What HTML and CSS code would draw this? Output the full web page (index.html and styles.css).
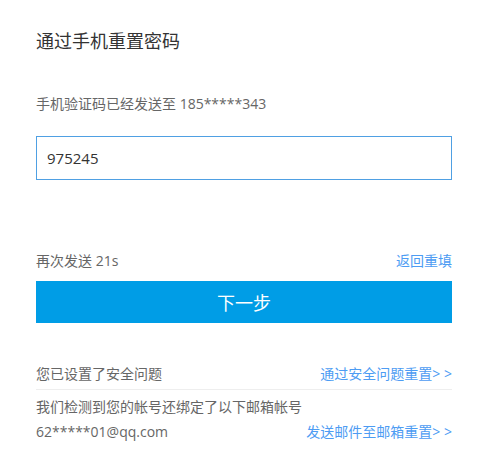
FILE: index.html
```html
<!DOCTYPE html>
<html lang="zh-CN">
<head>
<meta charset="utf-8">
<title>通过手机重置密码</title>
<link rel="stylesheet" href="styles.css">
</head>
<body>
<div class="panel">
  <h1 class="title">通过手机重置密码</h1>
  <p class="subtitle">手机验证码已经发送至 185*****343</p>
  <div class="code-input">975245</div>
  <div class="row resend">
    <span>再次发送 21s</span>
    <a class="link" href="#">返回重填</a>
  </div>
  <button class="btn-next">下一步</button>
  <div class="row security">
    <span>您已设置了安全问题</span>
    <a class="link" href="#">通过安全问题重置&gt; &gt;</a>
  </div>
  <div class="email-block">
    <div class="email-line">我们检测到您的帐号还绑定了以下邮箱帐号</div>
    <div class="row email-line">
      <span>62*****01@qq.com</span>
      <a class="link" href="#">发送邮件至邮箱重置&gt; &gt;</a>
    </div>
  </div>
</div>
</body>
</html>
```
FILE: styles.css
```css
html, body {
  margin: 0;
  padding: 0;
  background: #fff;
}
body {
  font-family: "Open Sans", "Noto Sans CJK SC", sans-serif;
  color: #666;
  font-size: 14px;
}
.panel {
  width: 416px;
  padding: 31px 0 0 36px;
}
.title {
  margin: 0;
  font-size: 18px;
  font-weight: normal;
  line-height: 20px;
  color: #333;
}
.subtitle {
  margin: 43px 0 0;
  line-height: 20px;
  font-size: 14px;
  color: #666;
}
.code-input {
  margin-top: 22px;
  box-sizing: border-box;
  height: 44px;
  border: 1px solid #4fa0e3;
  padding-left: 10px;
  display: flex;
  align-items: center;
  font-size: 15px;
  color: #333;
}
.row {
  display: flex;
  justify-content: space-between;
  align-items: center;
}
.resend {
  margin-top: 71px;
  line-height: 20px;
}
.link {
  color: #4d9cf3;
  text-decoration: none;
}
.btn-next {
  display: block;
  width: 100%;
  height: 42px;
  margin-top: 10px;
  border: 0;
  padding: 0;
  background: #009de6;
  color: #fff;
  font-family: inherit;
  font-size: 18px;
  cursor: pointer;
}
.security {
  margin-top: 41px;
  line-height: 20px;
  padding-bottom: 5px;
  border-bottom: 1px solid #eeeeee;
}
.email-block {
  padding-top: 4px;
}
.email-line {
  line-height: 25px;
}
```
